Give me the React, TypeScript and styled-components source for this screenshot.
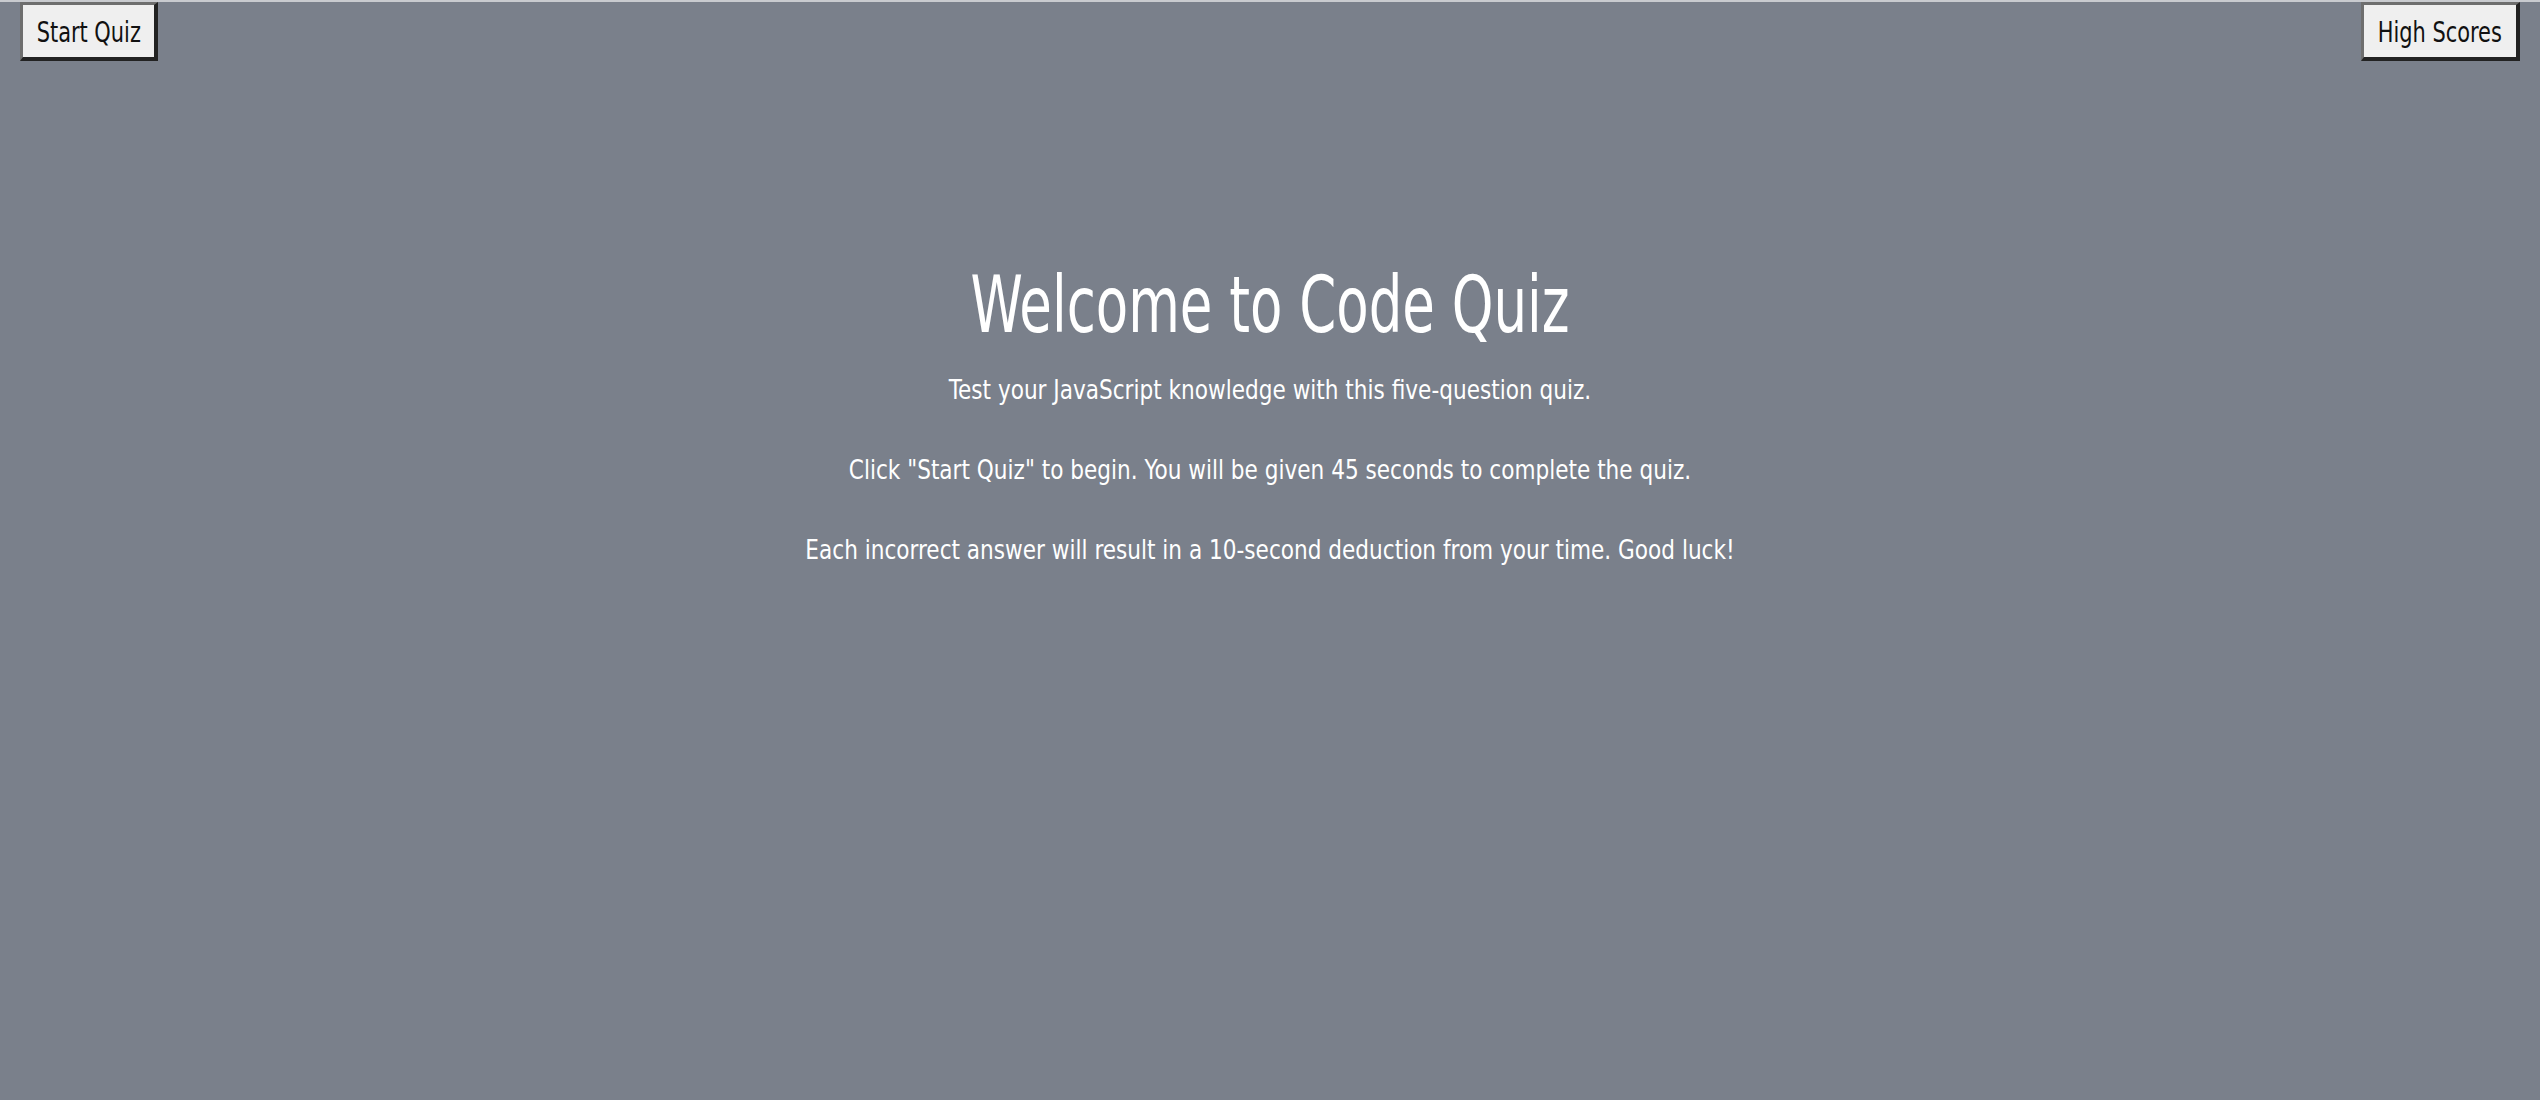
import React from "react";
import styled, { createGlobalStyle } from "styled-components";

const Global = createGlobalStyle`
  html, body {
    margin: 0;
    padding: 0;
    background: #7a808b;
  }
  body {
    font-family: "DejaVu Sans Condensed", "Liberation Sans", sans-serif;
  }
`;

const Page = styled.div`
  min-height: 1100px;
  box-sizing: border-box;
  border-top: 2px solid #c9cbcf;
  background: #7a808b;
  color: #ffffff;
`;

const Header = styled.header`
  display: flex;
  justify-content: space-between;
  align-items: flex-start;
  padding: 0 20px;
`;

const NavButton = styled.button<{ $w: number }>`
  box-sizing: border-box;
  width: ${(p) => p.$w}px;
  display: flex;
  justify-content: center;
  font-family: inherit;
  font-size: 28px;
  line-height: 32px;
  color: #111;
  background: #efefef;
  padding: 12px 0 8px;
  border-style: solid;
  border-width: 3px 4px 4px 3px;
  border-color: #6e6e6e #222 #222 #6e6e6e;
  cursor: pointer;
  margin: 0;
  white-space: nowrap;
`;

const Label = styled.span`
  display: inline-block;
  transform: scaleX(0.83);
  transform-origin: center;
`;

const Main = styled.main`
  display: flex;
  flex-direction: column;
  text-align: center;
  padding-top: 204px;
`;

const Title = styled.h1`
  font-size: 78px;
  line-height: 80px;
  font-weight: 400;
  margin: 0 0 29px;
  transform: scaleX(0.755);
  transform-origin: center;
`;

const Para = styled.p`
  font-size: 27px;
  line-height: 32px;
  margin: 0 0 48px;
  transform: scaleX(0.89);
  transform-origin: center;
`;

export default function App() {
  return (
    <>
      <Global />
      <Page>
        <Header>
          <NavButton $w={138}>
            <Label>Start Quiz</Label>
          </NavButton>
          <NavButton $w={159}>
            <Label>High Scores</Label>
          </NavButton>
        </Header>
        <Main>
          <Title>Welcome to Code Quiz</Title>
          <Para>Test your JavaScript knowledge with this five-question quiz.</Para>
          <Para>Click "Start Quiz" to begin. You will be given 45 seconds to complete the quiz.</Para>
          <Para>Each incorrect answer will result in a 10-second deduction from your time. Good luck!</Para>
        </Main>
      </Page>
    </>
  );
}
